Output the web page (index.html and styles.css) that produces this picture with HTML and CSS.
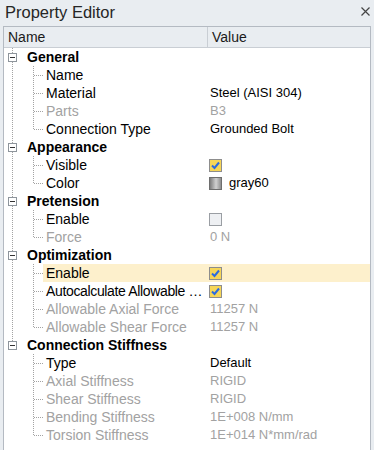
FILE: index.html
```html
<!DOCTYPE html>
<html lang="en">
<head>
  <meta charset="UTF-8" />
  <title>Property Editor</title>
  <link rel="stylesheet" href="styles.css">
</head>
<body>
  <div class="panel">
    <div class="titlebar">
      <span class="title">Property Editor</span>
      <svg class="close" width="9" height="9" viewBox="0 0 9 9"><path d="M0.5 0.5 L8.5 8.5 M8.5 0.5 L0.5 8.5" stroke="#454545" stroke-width="1.2" fill="none"/></svg>
    </div>

    <div class="grid">
      <div class="header">
        <div class="hcell hname">Name</div>
        <div class="hcell">Value</div>
      </div>

      <div class="group">
        <div class="ghead"><span class="toggle"></span>General</div>
        <div class="children">
          <div class="row"><span class="tick"></span><span class="label">Name</span><span class="value"></span></div>
          <div class="row"><span class="tick"></span><span class="label">Material</span><span class="value">Steel (AISI 304)</span></div>
          <div class="row off"><span class="tick"></span><span class="label">Parts</span><span class="value">B3</span></div>
          <div class="row"><span class="tick"></span><span class="label">Connection Type</span><span class="value">Grounded Bolt</span></div>
        </div>
      </div>

      <div class="group">
        <div class="ghead"><span class="toggle"></span>Appearance</div>
        <div class="children">
          <div class="row"><span class="tick"></span><span class="label">Visible</span><span class="value"><span class="check on"><svg width="11" height="11" viewBox="0 0 11 11"><path d="M2 5.5 L4.5 8 L9 2.5" stroke="#2b6be0" stroke-width="2" fill="none"/></svg></span></span></div>
          <div class="row"><span class="tick"></span><span class="label">Color</span><span class="value"><span class="swatch"></span>gray60</span></div>
        </div>
      </div>

      <div class="group">
        <div class="ghead"><span class="toggle"></span>Pretension</div>
        <div class="children">
          <div class="row"><span class="tick"></span><span class="label">Enable</span><span class="value"><span class="check"></span></span></div>
          <div class="row off"><span class="tick"></span><span class="label">Force</span><span class="value">0 N</span></div>
        </div>
      </div>

      <div class="group">
        <div class="ghead"><span class="toggle"></span>Optimization</div>
        <div class="children">
          <div class="row hl"><span class="tick"></span><span class="label">Enable</span><span class="value"><span class="check on"><svg width="11" height="11" viewBox="0 0 11 11"><path d="M2 5.5 L4.5 8 L9 2.5" stroke="#2b6be0" stroke-width="2" fill="none"/></svg></span></span></div>
          <div class="row"><span class="tick"></span><span class="label tight">Autocalculate Allowable …</span><span class="value"><span class="check on"><svg width="11" height="11" viewBox="0 0 11 11"><path d="M2 5.5 L4.5 8 L9 2.5" stroke="#2b6be0" stroke-width="2" fill="none"/></svg></span></span></div>
          <div class="row off"><span class="tick"></span><span class="label">Allowable Axial Force</span><span class="value">11257 N</span></div>
          <div class="row off"><span class="tick"></span><span class="label">Allowable Shear Force</span><span class="value">11257 N</span></div>
        </div>
      </div>

      <div class="group last">
        <div class="ghead"><span class="toggle"></span>Connection Stiffness</div>
        <div class="children">
          <div class="row"><span class="tick"></span><span class="label">Type</span><span class="value">Default</span></div>
          <div class="row off"><span class="tick"></span><span class="label">Axial Stiffness</span><span class="value">RIGID</span></div>
          <div class="row off"><span class="tick"></span><span class="label">Shear Stiffness</span><span class="value">RIGID</span></div>
          <div class="row off"><span class="tick"></span><span class="label">Bending Stiffness</span><span class="value">1E+008 N/mm</span></div>
          <div class="row off"><span class="tick"></span><span class="label">Torsion Stiffness</span><span class="value">1E+014 N*mm/rad</span></div>
        </div>
      </div>
    </div>
  </div>
</body>
</html>
```

FILE: styles.css
```css
body { margin: 0; background: #e9edf1; font-family: "Liberation Sans", Arial, sans-serif; color: #000; }
.panel { width: 374px; height: 450px; overflow: hidden; }
.titlebar { height: 26px; display: flex; align-items: center; justify-content: space-between; padding: 0 4px 0 5px; box-sizing: border-box; }
.title { font-size: 16.5px; color: #262626; margin-top: -2px; }
.close { margin-top: -4px; }

.grid { margin-left: 3px; width: 368px; height: 430px; box-sizing: border-box; border: 1px solid #b4bac2; border-bottom: none; background: #fff; font-size: 14px; }
.header { display: flex; height: 20px; background: #e9edf1; border-bottom: 1px solid #c9ced4; }
.hcell { line-height: 20px; padding-left: 4px; color: #1a1a1a; }
.hname { width: 199px; border-right: 1px solid #c9ced4; }

.group { background: repeating-linear-gradient(to bottom, #a3a3a3 0 1px, transparent 1px 2px) 8px 0 / 1px 100% no-repeat; }
.group.last { background-size: 1px 5px; }
.ghead { height: 18px; display: flex; align-items: center; font-weight: bold; }
.toggle { width: 9px; height: 9px; box-sizing: border-box; margin: 0 10px 0 4px; border: 1px solid #8e959c; background: #fff linear-gradient(#333, #333) center / 5px 1px no-repeat; }

.children { background: repeating-linear-gradient(to bottom, #a3a3a3 0 1px, transparent 1px 2px) 29px 0 / 1px calc(100% - 9px) no-repeat; }
.row { display: grid; grid-template-columns: 39px 164px 1fr; height: 18px; line-height: 18px; }
.tick { background: repeating-linear-gradient(to right, #a3a3a3 0 1px, transparent 1px 2px) 30px 9px / 11px 1px no-repeat; }
.label { padding: 0 2px 0 3px; white-space: nowrap; overflow: hidden; }
.label.tight { letter-spacing: -0.35px; }
.value { padding-left: 3px; display: flex; align-items: center; white-space: nowrap; font-size: 13px; }
.off .label, .off .value { color: #a2a2a2; }
.hl .label, .hl .value { background: #fdf0cc; }

.check { width: 13px; height: 13px; box-sizing: border-box; margin-left: -1px; border: 1px solid #9a9ea3; background: #eef0f3; display: flex; align-items: center; justify-content: center; }
.check.on { background: #f6d658; border-color: #8d8d8d; }
.swatch { width: 13px; height: 13px; box-sizing: border-box; margin: 0 7px 0 -1px; border: 1px solid #6e6e6e; background: linear-gradient(to right, #7c7c7c, #d0d0d0 55%, #8e8e8e); }
```
